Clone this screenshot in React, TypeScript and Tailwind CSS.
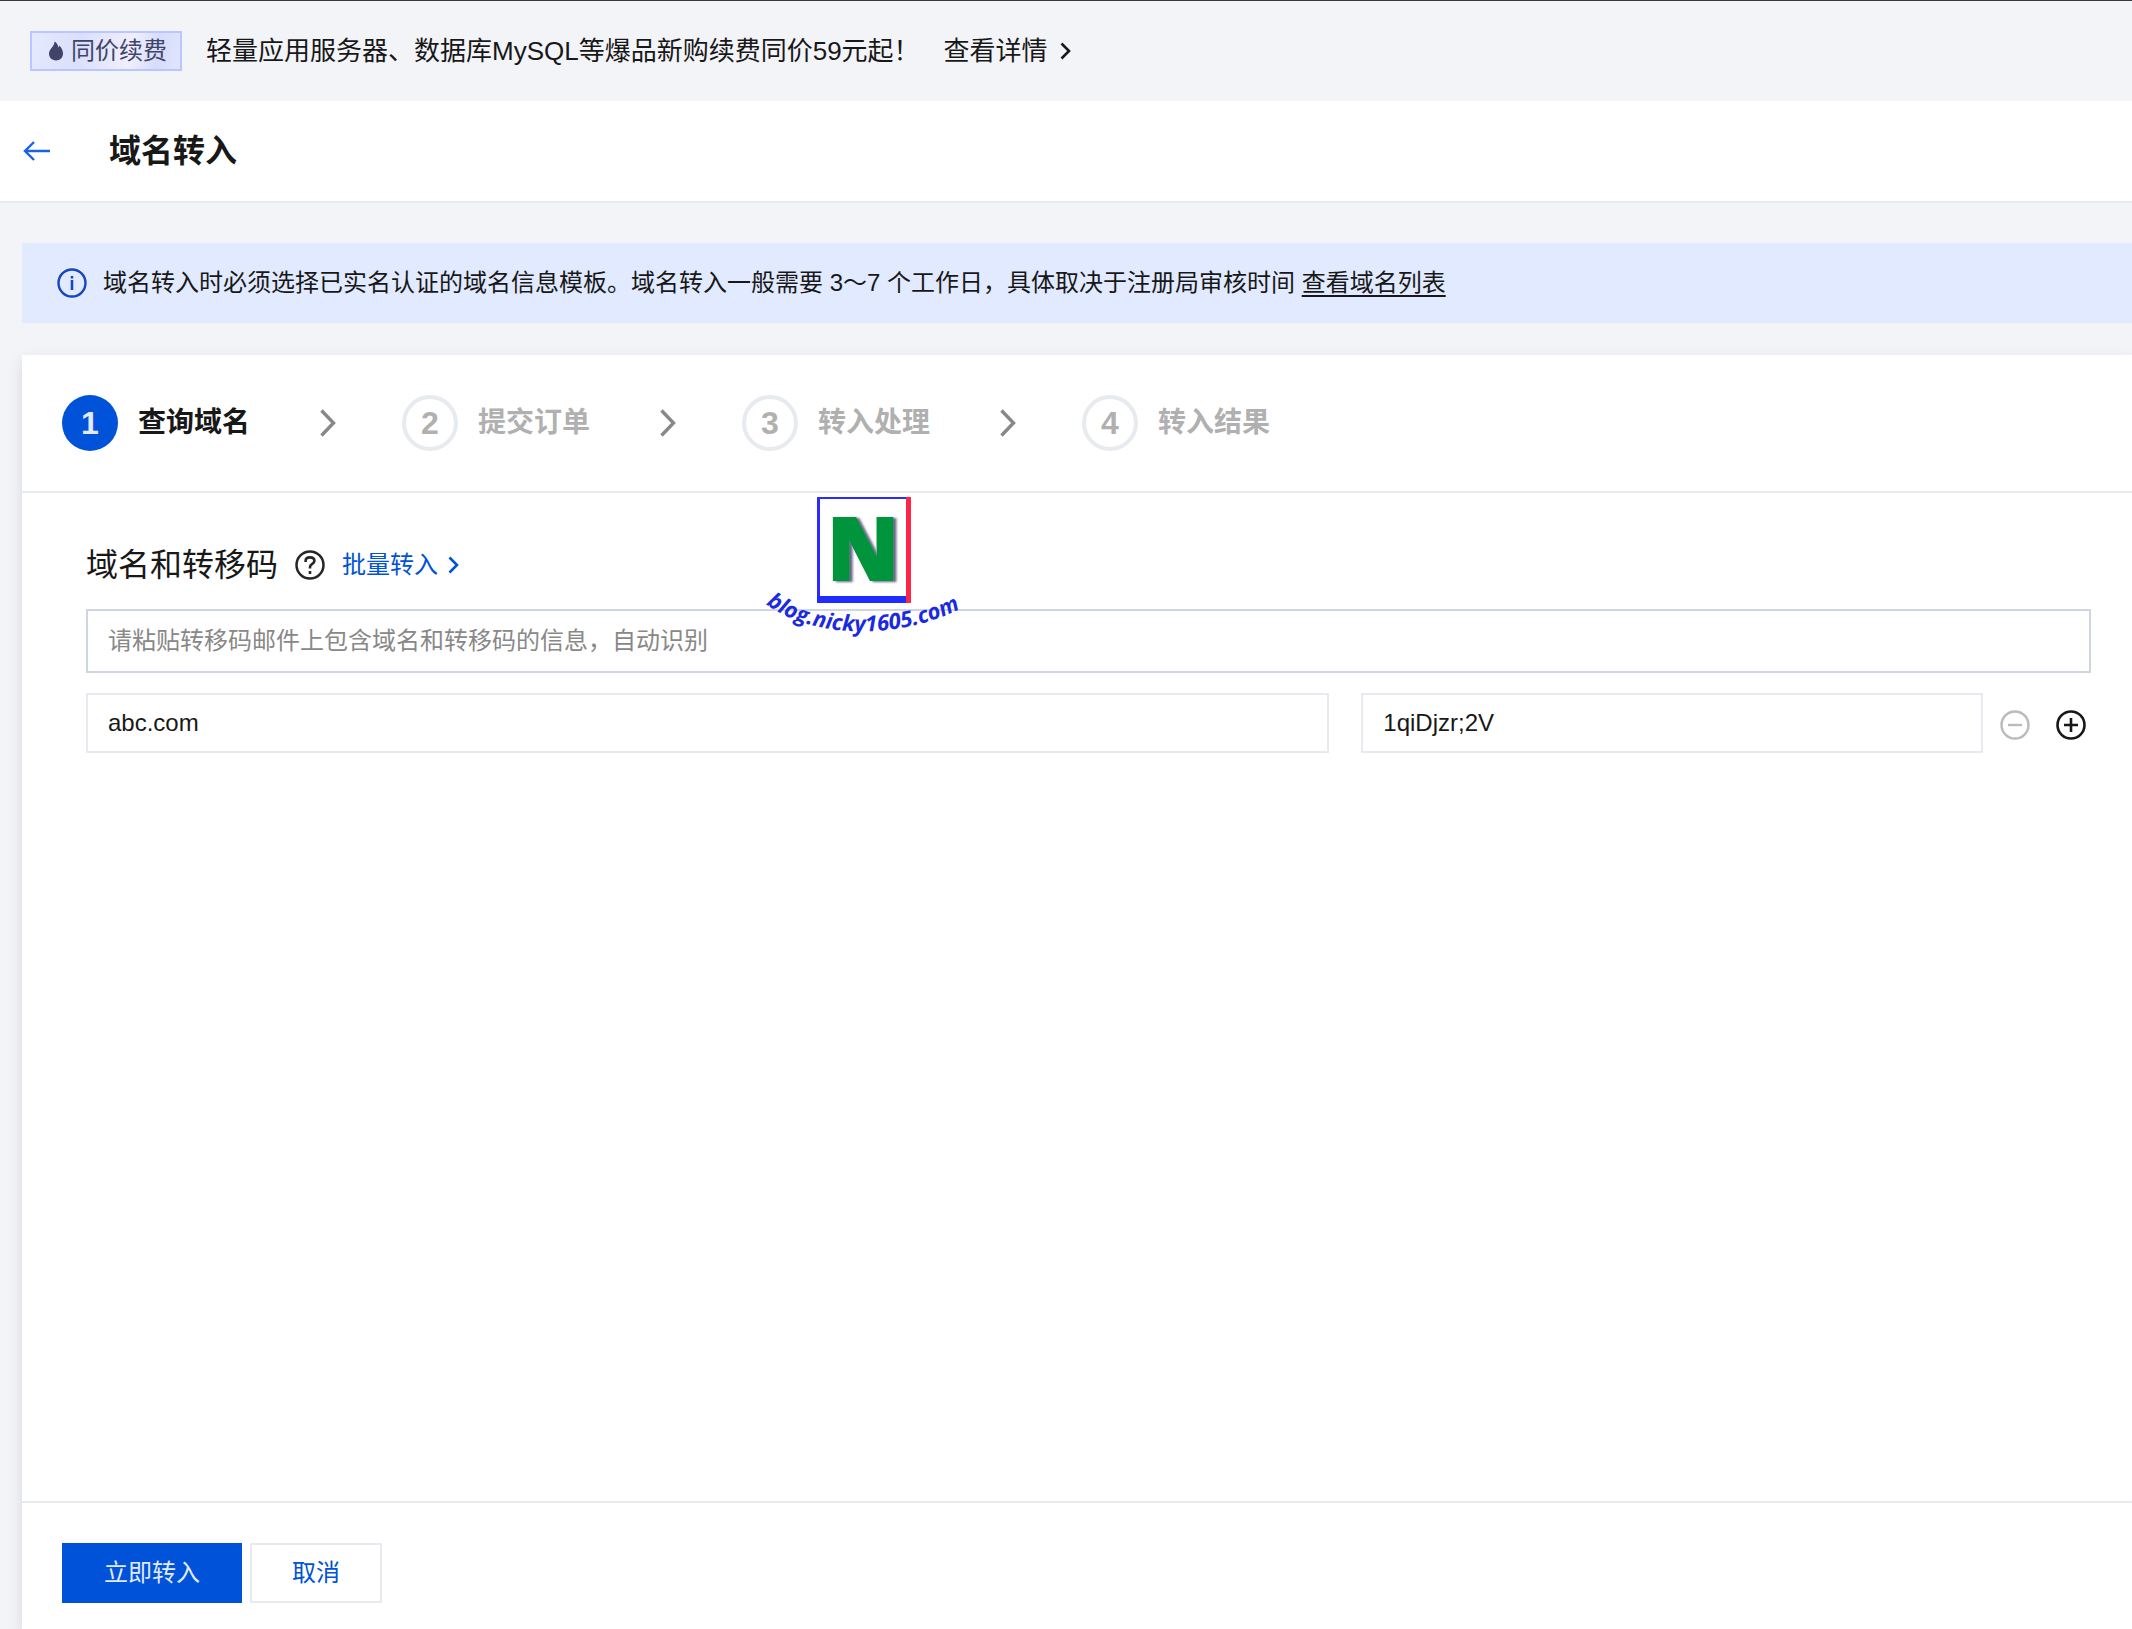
import React from "react";

const steps = ["查询域名", "提交订单", "转入处理", "转入结果"];

function Chevron({ className }: { className: string }) {
  return (
    <svg viewBox="0 0 12 18" fill="none" stroke="currentColor" aria-hidden="true" className={className}>
      <path d="M1.5 1.5 L9 9 L1.5 16.5" strokeWidth="2.6" />
    </svg>
  );
}

function StepArrow() {
  return (
    <svg viewBox="0 0 18 28" fill="none" stroke="currentColor" aria-hidden="true" className="ml-[69px] h-7 w-[18px] text-[#888]">
      <path d="M2.5 1.5 L14.5 14 L2.5 26.5" strokeWidth="3.4" />
    </svg>
  );
}

function Flame() {
  return (
    <svg viewBox="0 0 14 20" fill="#3f4468" aria-hidden="true" className="h-5 w-3.5">
      <path d="M5.6 0.4 C7.6 1.6 9.1 3.6 9.4 6.4 C10 6 10.3 5.2 10.3 4.4 C12.6 6.6 14 9.4 14 12.4 C14 16.4 11.2 19.4 7 19.4 C2.8 19.4 0 16.4 0 12.8 C0 9.4 1.8 8 3.3 5.9 C4.6 4.2 5.4 2.6 5.6 0.4 Z" />
    </svg>
  );
}

function Watermark() {
  return (
    <div className="pointer-events-none absolute top-1 left-[742px] w-50">
      <svg viewBox="0 0 200 156" className="h-[156px] w-[200px] overflow-visible" role="img" aria-label="blog.nicky1605.com">
        <defs>
          <path id="arc" d="M2 107 C50 143 142 145 208 105" />
          <filter id="letterShadow" x="-20%" y="-20%" width="150%" height="150%">
            <feDropShadow dx="3" dy="1" stdDeviation="1.2" floodColor="#2a1f55" floodOpacity="0.7" />
          </filter>
        </defs>
        <rect x="53" y="0" width="94" height="106" fill="#fff" />
        <rect x="53" y="0" width="90" height="2" fill="#2b2bff" />
        <rect x="53" y="0" width="3" height="106" fill="#2b2bff" />
        <rect x="53" y="99" width="90" height="7" fill="#1f2bff" />
        <rect x="142" y="0" width="5" height="106" fill="#ff2548" />
        <text
          x="99"
          y="83"
          textAnchor="middle"
          className="font-['Open_Sans'] text-[86px] font-extrabold"
          fill="#05943c"
          stroke="#05943c"
          strokeWidth="2"
          filter="url(#letterShadow)"
        >
          N
        </text>
        <text className="font-['Open_Sans',sans-serif] text-[22px] font-bold italic" fill="#1b2ae0">
          <textPath href="#arc">blog.nicky1605.com</textPath>
        </text>
      </svg>
    </div>
  );
}

export default function App() {
  return (
    <div className="flex min-h-screen flex-col bg-[#f3f4f8] font-['Liberation_Sans','Noto_Sans_CJK_SC',sans-serif] text-2xl text-[#181818]">
      <div className="flex h-[101px] items-center border-t border-[#38363b] pl-[30px] text-[26px]">
        <span className="flex h-10 w-38 items-center gap-2 border-2 border-[#bbc5ff] bg-[linear-gradient(100deg,#e6eaff_0%,#dadffb_32%,#f0efff_66%,#d6dcfa_84%,#e0e5ff_100%)] pl-[17px] text-2xl text-[#3f4468]">
          <Flame />
          同价续费
        </span>
        <span className="ml-6">轻量应用服务器、数据库MySQL等爆品新购续费同价59元起！</span>
        <a href="#detail" className="ml-6 flex items-center gap-3">
          查看详情
          <Chevron className="h-[18px] w-3" />
        </a>
      </div>

      <header className="flex h-[102px] items-center border-b-2 border-[#e7eaef] bg-white pl-[23px]">
        <button type="button" aria-label="返回" className="text-[#1664e0]">
          <svg viewBox="0 0 28 20" fill="none" stroke="currentColor" strokeWidth="2.4" className="h-5 w-7" aria-hidden="true">
            <path d="M27 10 H2 M11 1 L2 10 L11 19" />
          </svg>
        </button>
        <h1 className="ml-[58px] text-[32px] font-bold">域名转入</h1>
      </header>

      <main className="flex flex-1 flex-col pt-10 pl-[22px]">
        <div className="flex h-20 items-center bg-[#e1eaff] pl-[35px]">
          <svg viewBox="0 0 30 30" fill="none" stroke="#1447c0" className="mr-4 h-[30px] w-[30px]" aria-hidden="true">
            <circle cx="15" cy="15" r="13.5" strokeWidth="2.4" />
            <path d="M15 12 V22 M15 8 V10.4" strokeWidth="2.6" />
          </svg>
          <p>
            域名转入时必须选择已实名认证的域名信息模板。域名转入一般需要 3～7 个工作日，具体取决于注册局审核时间{" "}
            <a href="#list" className="underline decoration-2 underline-offset-4">查看域名列表</a>
          </p>
        </div>

        <section className="mt-8 flex flex-1 flex-col bg-white shadow-[0_6px_14px_rgba(54,58,80,0.14)]">
          <ol className="flex h-[138px] items-center border-b-2 border-[#e7eaef] pl-10 text-[28px] font-bold">
            {steps.map((label, i) => (
              <li key={label} className="flex w-[340px] items-center">
                <span
                  className={
                    i === 0
                      ? "flex size-14 items-center justify-center rounded-full bg-[#0052d9] text-[32px] text-[#e1eaff]"
                      : "flex size-14 items-center justify-center rounded-full border-4 border-[#e7eaef] text-[32px] text-[#b0b0b0]"
                  }
                >
                  {i + 1}
                </span>
                <span className={i === 0 ? "ml-5" : "ml-5 text-[#b0b0b0]"}>{label}</span>
                {i < 3 && <StepArrow />}
              </li>
            ))}
          </ol>

          <div className="relative flex-1 pt-12 pr-[41px] pl-16">
            <div className="flex h-12 items-center">
              <h2 className="text-[32px]">域名和转移码</h2>
              <svg viewBox="0 0 30 30" fill="none" stroke="#262626" className="ml-[17px] h-[30px] w-[30px]" aria-hidden="true">
                <circle cx="15" cy="15" r="13.5" strokeWidth="2.5" />
                <path d="M10.6 12 V11 C10.6 8.6 12.4 7.4 15 7.4 C17.6 7.4 19.4 8.8 19.4 11 C19.4 14 15 13.8 15 17 V18.6 M15 21 V24" strokeWidth="2.6" />
              </svg>
              <a href="#batch" className="ml-[17px] flex items-center gap-2.5 text-[#0052d9]">
                批量转入
                <Chevron className="h-[18px] w-3" />
              </a>
            </div>
            <input
              aria-label="转移码邮件信息"
              placeholder="请粘贴转移码邮件上包含域名和转移码的信息，自动识别"
              className="mt-5 block h-16 w-full border-2 border-[#cfd5e2] px-5 placeholder:text-[#888]"
            />
            <div className="mt-5 flex items-center">
              <div className="grid flex-1 grid-cols-[2fr_1fr] gap-8">
                <input aria-label="域名" defaultValue="abc.com" className="h-15 w-full min-w-0 border-2 border-[#e7eaef] px-5" />
                <input aria-label="转移码" defaultValue="1qiDjzr;2V" className="h-15 w-full min-w-0 border-2 border-[#e7eaef] px-5" />
              </div>
              <button type="button" disabled aria-label="删除" className="mt-1 ml-[17px] text-[#bbb]">
                <svg viewBox="0 0 30 30" fill="none" stroke="currentColor" strokeWidth="2.4" className="h-[30px] w-[30px]" aria-hidden="true">
                  <circle cx="15" cy="15" r="13.5" />
                  <path d="M8 15 H22" />
                </svg>
              </button>
              <button type="button" aria-label="添加" className="mt-1 mr-[5px] ml-[26px] text-[#181818]">
                <svg viewBox="0 0 30 30" fill="none" stroke="currentColor" strokeWidth="2.6" className="h-[30px] w-[30px]" aria-hidden="true">
                  <circle cx="15" cy="15" r="13.5" />
                  <path d="M8 15 H22 M15 8 V22" />
                </svg>
              </button>
            </div>
            <Watermark />
          </div>

          <footer className="flex gap-2 border-t-2 border-[#e7eaef] pt-10 pb-[26px] pl-10">
            <button type="button" className="h-15 w-45 bg-[#0052d9] text-[#e1eaff]">立即转入</button>
            <button type="button" className="h-15 w-33 border-2 border-[#e7eaef] text-[#0052d9]">取消</button>
          </footer>
        </section>
      </main>
    </div>
  );
}
